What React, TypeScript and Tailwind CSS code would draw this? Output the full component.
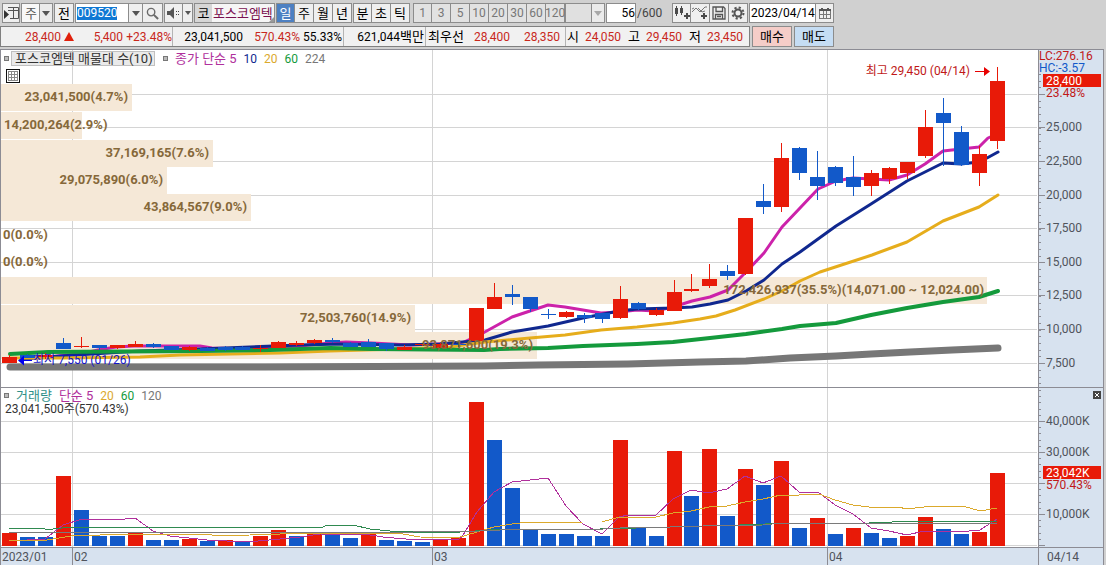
import { ReactNode } from "react";
import clsx from "clsx";

const RED = "#e81a08";
const BLUE = "#1259c9";
const GRID = "#d4d4d4";
const AXIS = "#8c8c94";

// Both panes share one coordinate system, only the view box differs.
const LEFT = 1;
const WIDTH = 1102;
const AXIS_X = 1038;
const STEP = 17.96;
const BAR = 15;
const MONTH_LINES = [72, 432, 827];

const barX = (i: number) => Math.round(2 + STEP * i);

// [up, high, body top, body bottom, low]
type Candle = [boolean, number, number, number, number];

const candles: Candle[] = [
  [true, 355, 357, 363, 363],
  [false, 354, 355, 358, 358],
  [true, 353, 355, 357, 359],
  [false, 338, 343, 349, 349],
  [true, 337, 346, 347, 348],
  [false, 345, 345, 348, 350],
  [true, 345, 345, 348, 349],
  [true, 341, 344, 347, 347],
  [false, 343, 344, 347, 348],
  [false, 346, 346, 350, 350],
  [true, 346, 347, 350, 351],
  [false, 347, 348, 351, 351],
  [false, 346, 347, 350, 351],
  [false, 346, 347, 350, 350],
  [true, 345, 348, 349, 352],
  [true, 341, 342, 348, 348],
  [true, 341, 343, 345, 346],
  [true, 339, 340, 343, 344],
  [false, 338, 340, 342, 343],
  [false, 342, 343, 347, 347],
  [false, 339, 342, 347, 347],
  [false, 343, 343, 349, 351],
  [true, 345, 347, 350, 350],
  [true, 344, 344, 345, 346],
  [true, 343, 344, 348, 348],
  [false, 341, 344, 345, 347],
  [true, 308, 308, 341, 341],
  [true, 283, 297, 309, 309],
  [false, 285, 294, 297, 305],
  [false, 297, 297, 309, 312],
  [false, 309, 314, 315, 319],
  [true, 311, 312, 317, 318],
  [false, 313, 315, 318, 323],
  [false, 313, 313, 319, 323],
  [true, 286, 299, 318, 319],
  [false, 302, 303, 309, 310],
  [true, 308, 310, 315, 316],
  [true, 280, 292, 311, 311],
  [true, 274, 289, 291, 292],
  [true, 264, 279, 286, 288],
  [false, 265, 271, 276, 280],
  [true, 218, 218, 274, 275],
  [false, 184, 201, 207, 214],
  [true, 143, 158, 207, 212],
  [false, 147, 148, 173, 180],
  [false, 151, 177, 186, 200],
  [false, 166, 167, 183, 186],
  [false, 156, 177, 187, 196],
  [true, 170, 173, 186, 196],
  [true, 167, 168, 179, 184],
  [true, 162, 162, 173, 179],
  [true, 110, 127, 156, 158],
  [false, 98, 113, 123, 166],
  [false, 126, 132, 165, 166],
  [true, 146, 154, 173, 186],
  [true, 67, 81, 141, 149],
];

// [up, top of the bar]
const volumes: [boolean, number][] = [
  [true, 533], [false, 537], [false, 537], [true, 476], [false, 510],
  [false, 536], [false, 536], [true, 533], [false, 540], [false, 540],
  [true, 539], [false, 541], [true, 540], [false, 541], [true, 536],
  [true, 530], [false, 536], [true, 534], [false, 534], [false, 538],
  [true, 534], [false, 540], [false, 541], [false, 542], [true, 540],
  [true, 538], [true, 402], [false, 440], [false, 488], [false, 530],
  [false, 534], [false, 534], [false, 536], [false, 536], [true, 440],
  [false, 528], [false, 536], [true, 451], [false, 496], [true, 449],
  [false, 516], [true, 469], [false, 485], [true, 461], [false, 528],
  [true, 518], [false, 534], [true, 528], [false, 533], [false, 538],
  [true, 536], [true, 517], [false, 529], [false, 534], [true, 532],
  [true, 473],
];

const priceLines = [
  {
    color: "#777777",
    width: 7,
    points:
      "10,367 265,367 484,366 538,365 628,364 700,362 746,361 790,358 836,356 871,354 910,352 952,350 998,348",
  },
  {
    color: "#cc22aa",
    width: 3,
    points:
      "23,359 48,357 80,354 98,350 116,347 134,346 200,346 212,348 250,349 282,347 300,346 330,343 346,342 372,343 410,345 462,343 483,333 512,317 530,311 548,305 565,307 583,310 601,313 619,312 637,310 655,311 673,307 692,301 710,297 728,290 746,272 764,253 782,227 800,208 818,189 836,181 853,178 871,179 889,180 907,175 925,164 943,151 961,149 979,147 988,138 997,134",
  },
  {
    color: "#10288f",
    width: 3,
    points:
      "23,359 60,356 140,351 200,349 250,347 300,345 340,344 400,345 440,344 485,340 512,332 530,329 548,326 583,318 619,311 637,309 673,308 692,307 710,304 728,300 746,291 764,280 782,264 800,252 836,226 871,204 907,181 943,163 961,164 979,162 987,158 998,152",
  },
  {
    color: "#e6ad1c",
    width: 3,
    points:
      "10,358 60,358 140,357 180,355 280,353 330,351 400,349 450,347 485,342 530,338 565,335 601,330 637,327 673,323 700,319 716,316 735,310 764,299 782,291 800,281 820,272 872,255 907,242 943,221 979,207 998,195",
  },
  {
    color: "#149a3c",
    width: 4,
    points:
      "10,354 48,352 200,351 270,350 330,348 372,349 484,350 500,349 548,348 583,346 637,344 673,342 710,338 746,334 782,329 800,326 836,323 871,315 907,308 943,302 979,297 998,291",
  },
];

const volumeLines = [
  {
    color: "#b0309c",
    points:
      "9,541 45,539 63,525 82,519 125,519 135,518 153,531 170,536 207,540 247,542 280,539 300,537 320,534 370,535 383,537 417,540 442,539 457,540 462,537 477,512 494,492 512,482 530,480 548,478 566,506 583,524 602,534 619,517 628,515 656,515 673,499 691,490 709,493 727,489 745,476 763,483 781,476 799,492 818,492 835,505 853,514 871,528 889,531 907,535 924,531 969,531 980,530 997,519",
  },
  {
    color: "#dba92c",
    points:
      "9,540 47,540 77,535 100,535 127,534 207,534 217,536 250,535 280,534 287,533 397,533 420,537 457,538 477,532 494,527 512,524 520,523 583,522 602,522 619,517 656,517 673,513 691,511 709,507 727,506 745,502 763,499 781,495 799,495 819,494 835,500 853,505 869,507 899,507 906,509 933,506 963,506 980,511 997,508",
  },
  {
    color: "#2f8a50",
    points:
      "9,528 37,528 45,529 53,529 72,527 323,527 327,525 353,525 370,529 390,531 413,532 460,532 490,530 537,529 600,529 637,528 703,526 740,525 790,523 869,523 916,521 997,521",
  },
  {
    color: "#7a7a7a",
    points:
      "9,532 370,532 413,532 480,531 520,529 603,529 637,527 670,527 703,526 763,525 782,523 862,523 997,524",
  },
];

type Profile = { y: number; right: number; label: string; start?: boolean; end: number };

const profile: Profile[] = [
  { y: 84, right: 132, end: 128, label: "23,041,500(4.7%)" },
  { y: 112, right: 82, end: 4, start: true, label: "14,200,264(2.9%)" },
  { y: 140, right: 213, end: 209, label: "37,169,165(7.6%)" },
  { y: 167, right: 167, end: 163, label: "29,075,890(6.0%)" },
  { y: 194, right: 251, end: 247, label: "43,864,567(9.0%)" },
  { y: 222, right: 0, end: 3, start: true, label: "0(0.0%)" },
  { y: 249, right: 0, end: 3, start: true, label: "0(0.0%)" },
  { y: 277, right: 987, end: 984, label: "172,426,937(35.5%)(14,071.00 ~ 12,024.00)" },
  { y: 305, right: 415, end: 411, label: "72,503,760(14.9%)" },
  { y: 332, right: 537, end: 533, label: "93,871,600(19.3%)" },
];

const priceTicks = [
  { y: 94, label: "" },
  { y: 127, label: "25,000" },
  { y: 161, label: "22,500" },
  { y: 195, label: "20,000" },
  { y: 228, label: "17,500" },
  { y: 262, label: "15,000" },
  { y: 295, label: "12,500" },
  { y: 329, label: "10,000" },
  { y: 363, label: "7,500" },
];

const volumeTicks = [
  { y: 421, label: "40,000K" },
  { y: 452, label: "30,000K" },
  { y: 483, label: "" },
  { y: 514, label: "10,000K" },
  { y: 545, label: "" },
];

const months = [
  { label: "2023/01", cls: "grow-[71]" },
  { label: "02", cls: "grow-[359] border-l" },
  { label: "03", cls: "grow-[394] border-l" },
  { label: "04", cls: "grow-[210] border-l" },
  { label: "04/14", cls: "grow-[64] border-l" },
];

// --- Toolbar -------------------------------------------------------

function Arrow({ muted = false }: { muted?: boolean }) {
  return (
    <svg viewBox="0 0 8 5" className="h-[5px] w-2" aria-hidden="true">
      <path d="M0 0h8L4 5z" fill={muted ? "#a8a8a8" : "#555"} />
    </svg>
  );
}

function IconButton({
  label,
  className,
  children,
}: {
  label: string;
  className?: string;
  children: ReactNode;
}) {
  return (
    <button
      aria-label={label}
      className={clsx(
        "flex h-5 shrink-0 items-center justify-center border border-[#8c8c8c] bg-[#efefef]",
        className
      )}
    >
      {children}
    </button>
  );
}

function Combo({
  label,
  value,
  className,
  muted,
}: {
  label: string;
  value: string;
  className: string;
  muted?: boolean;
}) {
  return (
    <div className={clsx("relative flex h-5 shrink-0", className)}>
      <select
        aria-label={label}
        disabled={muted}
        className={clsx(
          "w-full appearance-none border border-[#8c8c8c] pl-[3px] text-[13px] leading-none text-[#555]",
          muted ? "bg-[#e0e0e0]" : "bg-[#f8f8f8]"
        )}
      >
        <option>{value}</option>
      </select>
      <span className="pointer-events-none absolute inset-y-0 right-0 flex w-[14px] items-center justify-center border border-[#8c8c8c] bg-[#ebebeb]">
        <Arrow muted={muted} />
      </span>
    </div>
  );
}

const periods = ["일", "주", "월", "년", "분", "초", "틱"];
const minutes = ["1", "3", "5", "10", "20", "30", "60", "120"];

function Toolbar() {
  return (
    <div className="flex h-[26px] items-center gap-px pl-[2px] whitespace-nowrap">
      <IconButton label="창 배치" className="w-[18px]">
        <svg viewBox="0 0 15 14" className="h-[14px] w-[15px]">
          <path d="M4 1.500h10.500v11H6M9.500 1.500v11M4 4.500h10.500" fill="none" stroke="#555" />
          <path d="M0 4l5 4.500L0 13z" fill="#333" />
        </svg>
      </IconButton>
      <Combo label="종목 구분" value="주" className="w-8" />
      <button className="h-5 w-5 shrink-0 border border-[#8c8c8c] bg-[#efefef] text-[13px] leading-none">
        전
      </button>
      <div className="flex h-5 shrink-0">
        <div className="flex w-[54px] items-center border border-[#8c8c8c] bg-white pl-px">
          <input
            aria-label="종목코드"
            defaultValue="009520"
            className="h-[13px] w-10 bg-[#0f78d4] text-[12px] leading-none text-white outline-none"
          />
        </div>
        <IconButton label="종목코드 목록" className="w-[14px] border-l-0">
          <Arrow />
        </IconButton>
        <IconButton label="종목 검색" className="w-5 border-l-0">
          <svg viewBox="0 0 14 14" className="size-[13px]" fill="none" stroke="#6a6a6a">
            <circle cx="5.500" cy="5.500" r="4" strokeWidth="1.500" />
            <path d="M8.500 8.500l4.500 4.500" strokeWidth="2.200" />
          </svg>
        </IconButton>
      </div>
      <div className="flex h-5 shrink-0">
        <IconButton label="음성" className="w-[19px]">
          <svg viewBox="0 0 14 12" className="h-3 w-[14px]">
            <path d="M0 4h3l4-4v12L3 8H0z" fill="#555" />
            <path d="M9 4h1v1H9zM9 7h1v1H9zM11 4h1v1h-1zM11 7h1v1h-1z" fill="#444" />
          </svg>
        </IconButton>
        <IconButton label="음성 설정" className="w-[10px] border-l-0">
          <svg viewBox="0 0 6 4" className="h-1 w-[6px]">
            <path d="M0 0h6L3 4z" fill="#555" />
          </svg>
        </IconButton>
      </div>
      <div className="relative flex h-5 w-[81px] shrink-0 items-center border border-[#8c8c8c] bg-[#f6f6f6] text-[13px] leading-none">
        <span className="flex h-[18px] w-[17px] items-center justify-center bg-[#d6d6d6]">코</span>
        <span className="pl-px text-[#7a1050]">포스코엠텍</span>
        <svg viewBox="0 0 5 5" className="absolute right-0 bottom-0 size-[5px]">
          <path d="M5 0v5H0z" fill="#999" />
        </svg>
      </div>
      <div className="flex h-5 shrink-0">
        {periods.map((p, i) => (
          <button
            key={p}
            className={clsx(
              "w-[19px] border-y border-r border-[#8c8c8c] text-[13px] leading-none",
              i === 0 ? "border-l bg-[#4d80c2] text-white" : "bg-[#efefef]",
              i === 3 && "mr-px",
              i === 4 && "border-l"
            )}
          >
            {p}
          </button>
        ))}
      </div>
      <div className="ml-[2px] flex h-5 shrink-0">
        {minutes.map((m, i) => (
          <button
            key={m}
            className={clsx(
              "flex w-[19px] items-center justify-center border-y border-r border-[#8c8c8c] bg-[#e2e2e2] text-[12px] leading-none text-[#777]",
              i === 0 && "border-l"
            )}
          >
            {m}
          </button>
        ))}
        <Combo label="분 선택" value="" muted className="w-10" />
      </div>
      <input
        aria-label="표시 봉수"
        defaultValue="56"
        className="h-5 w-[30px] shrink-0 border border-[#8c8c8c] bg-white text-right text-[12px] outline-none"
      />
      <span className="w-[33px] shrink-0 text-[12px] text-[#444]">/600</span>
      <div className="flex h-5 shrink-0 pl-px">
        <IconButton label="차트 종류" className="w-[19px]">
          <svg viewBox="0 0 16 14" className="h-[14px] w-4" fill="#4a4a4a">
            <path d="M2 0h1v10H2zM1 2h3v6H1zM7 0h1v9H7zM6 2h3v5H6z" />
            <path d="M12 7h2v2h2v2h-2v2h-2v-2h-2V9h2z" />
          </svg>
        </IconButton>
        <IconButton label="지표 추가" className="w-[19px] border-l-0">
          <svg viewBox="0 0 16 14" className="h-[14px] w-4">
            <path d="M0 6l4-4 4 4 5-5h2M0 3l2-1M6 2l4 4 3-1" fill="none" stroke="#777" />
            <path d="M11 7h2v2h2v2h-2v2h-2v-2H9V9h2z" fill="#4a4a4a" />
          </svg>
        </IconButton>
        <IconButton label="저장" className="w-[19px] border-l-0">
          <svg viewBox="0 0 14 14" className="size-[14px]" fill="none" stroke="#555" strokeWidth="1.300">
            <path d="M1 1h10.500L13 2.500V13H1zM4 1v4.500h6.500V1M3.500 13V8.500h7V13M5 10.500h4" />
          </svg>
        </IconButton>
        <IconButton label="설정" className="w-[19px] border-l-0">
          <svg viewBox="0 0 14 14" className="size-[14px]" fill="none" stroke="#555">
            <circle cx="7" cy="7" r="3.500" strokeWidth="2" />
            <circle cx="7" cy="7" r="5.500" strokeWidth="2" strokeDasharray="2.200 2.120" />
          </svg>
        </IconButton>
      </div>
      <div className="flex h-5 shrink-0">
        <input
          aria-label="기준일"
          defaultValue="2023/04/14"
          className="w-[67px] border border-[#8c8c8c] bg-white pl-px text-[12px] outline-none"
        />
        <IconButton label="달력" className="w-[18px] border-l-0">
          <svg viewBox="0 0 12 11" className="h-[11px] w-3" shapeRendering="crispEdges">
            <path d="M0.500 1.500h11v9H0.500zM4.500 3v7M7.500 3v7M1 6.500h10" fill="none" stroke="#777" />
            <path d="M0 1h12v2H0zM2 0h2v1H2zM8 0h2v1H8z" fill="#555" />
          </svg>
        </IconButton>
      </div>
    </div>
  );
}

function Quote({ className, children }: { className: string; children: ReactNode }) {
  return <span className={clsx("shrink-0 text-right", className)}>{children}</span>;
}

function QuoteRow() {
  const cell = "flex h-full shrink-0 items-center border-r border-[#b4b4b4]";
  return (
    <div className="flex h-[23px] items-start gap-[2px] text-[12px] leading-none whitespace-nowrap">
      <div className="flex h-[21px] w-[750px] shrink-0 items-center border border-[#808080] bg-[#f1f1f1]">
        <div className={clsx(cell, "w-[172px] text-[#c8281c]")}>
          <Quote className="w-[60px]">28,400</Quote>
          <svg viewBox="0 0 10 9" className="ml-[3px] h-[9px] w-[10px]">
            <path d="M5 0l5 9H0z" fill="#e0200c" />
          </svg>
          <Quote className="w-[49px]">5,400</Quote>
          <Quote className="w-[49px]">+23.48%</Quote>
        </div>
        <div className={clsx(cell, "w-[171px]")}>
          <Quote className="w-[70px]">23,041,500</Quote>
          <Quote className="w-[57px] text-[#c8281c]">570.43%</Quote>
          <Quote className="w-[42px]">55.33%</Quote>
        </div>
        <div className={clsx(cell, "w-[82px] justify-end pr-px")}>
          621,044<span className="text-[13px]">백만</span>
        </div>
        <div className={clsx(cell, "w-[140px]")}>
          <Quote className="w-[38px] text-[13px]">최우선</Quote>
          <Quote className="w-[46px] text-[#c8281c]">28,400</Quote>
          <Quote className="w-[50px] text-[#c8281c]">28,350</Quote>
        </div>
        <div className="flex items-center">
          <Quote className="w-[13px] text-[13px]">시</Quote>
          <Quote className="w-[42px] text-[#c8281c]">24,050</Quote>
          <Quote className="w-[19px] text-[13px]">고</Quote>
          <Quote className="w-[42px] text-[#c8281c]">29,450</Quote>
          <Quote className="w-[19px] text-[13px]">저</Quote>
          <Quote className="w-[42px] text-[#c8281c]">23,450</Quote>
        </div>
      </div>
      <button className="h-[21px] w-10 shrink-0 border border-[#8c8c8c] bg-[#f5cdc8] text-[13px] leading-none">
        매수
      </button>
      <button className="h-[21px] w-10 shrink-0 border border-[#8c8c8c] bg-[#c5ddf4] text-[13px] leading-none">
        매도
      </button>
    </div>
  );
}

// --- Charts --------------------------------------------------------

function Marker() {
  return <span className="size-[5px] shrink-0 border border-[#777] bg-[#bbb]" />;
}

function Axis({
  ticks,
  top,
  bottom,
  minor,
}: {
  ticks: { y: number; label: string }[];
  top: number;
  bottom: number;
  minor: number;
}) {
  const first = ticks[0].y;
  const count = Math.floor((bottom - first) / minor);
  const before = Math.floor((first - top) / minor);
  return (
    <g>
      <rect x={AXIS_X} y={top} width={LEFT + WIDTH - AXIS_X} height={bottom - top} fill="#d7e2ef" />
      <g shapeRendering="crispEdges" fill={AXIS}>
        <rect x={AXIS_X} y={top} width={1} height={bottom - top} />
        {Array.from({ length: count + before + 1 }, (_, i) => (
          <rect
            key={i}
            x={AXIS_X}
            y={Math.round(first + (i - before) * minor)}
            width={3}
            height={1}
          />
        ))}
        {ticks.map((t) => (
          <rect key={t.y} x={AXIS_X} y={t.y} width={7} height={1} />
        ))}
      </g>
      {ticks.map((t) => (
        <text key={t.y} x={1046} y={t.y + 4} fill="#50545c">
          {t.label}
        </text>
      ))}
    </g>
  );
}

function Grid({ rows, top, bottom }: { rows: number[]; top: number; bottom: number }) {
  return (
    <g fill={GRID} shapeRendering="crispEdges">
      {rows.map((y) => (
        <rect key={y} x={LEFT} y={y} width={1036} height={1} />
      ))}
      {MONTH_LINES.map((x) => (
        <rect key={x} x={x} y={top} width={1} height={bottom - top} />
      ))}
    </g>
  );
}

function PriceChart() {
  return (
    <svg viewBox={`${LEFT} 50 ${WIDTH} 337`} className="block h-auto w-full" fontSize={12}>
      <Grid rows={priceTicks.map((t) => t.y)} top={50} bottom={387} />
      <g shapeRendering="crispEdges">
        {profile.map((p) =>
          p.right ? (
            <rect key={p.y} x={LEFT} y={p.y} width={p.right - LEFT} height={27} fill="#f5e8d7" />
          ) : null
        )}
      </g>
      {priceLines.map((l) => (
        <polyline
          key={l.color}
          points={l.points}
          fill="none"
          stroke={l.color}
          strokeWidth={l.width}
          strokeLinejoin="round"
          strokeLinecap="round"
        />
      ))}
      <g shapeRendering="crispEdges">
        {candles.map(([up, high, top, bottom, low], i) => (
          <g key={i} fill={up ? RED : BLUE}>
            <rect x={barX(i) + 7} y={high} width={1} height={low - high} />
            <rect x={barX(i)} y={top} width={BAR} height={bottom - top} />
          </g>
        ))}
      </g>
      <g fontWeight={700} fontSize={13} fill="#86683a">
        {profile.map((p) => (
          <text key={p.y} x={p.end} y={p.y + 17} textAnchor={p.start ? "start" : "end"}>
            {p.label}
          </text>
        ))}
      </g>
      <g fill="#1414c8">
        <path d="M18 360.500l6-5v10zM24 360h8v1h-8z" fill="#0000ee" />
        <text x={33} y={364}>최저 7,550 (01/26)</text>
      </g>
      <g fill="#c01818">
        <text x={970} y={75} textAnchor="end">최고 29,450 (04/14)</text>
        <path d="M975 71h9v-4l6 4.500-6 4.500v-4h-9z" fill="#e80000" />
      </g>
      <Axis ticks={priceTicks} top={50} bottom={387} minor={6.73} />
      <rect x={AXIS_X + 1} y={51} width={63} height={23} fill="#d7e2ef" />
      <text x={1039} y={60} fill="#c01818">LC:276.16</text>
      <text x={1039} y={72} fill="#1259c9">HC:-3.57</text>
      <rect x={1043} y={74} width={58} height={13} fill={RED} />
      <text x={1046} y={85} fill="#fff">28,400</text>
      <text x={1046} y={97} fill="#c01818">23.48%</text>
    </svg>
  );
}

function VolumeChart() {
  return (
    <svg viewBox={`${LEFT} 388 ${WIDTH} 159`} className="block h-auto w-full" fontSize={12}>
      <Grid rows={volumeTicks.map((t) => t.y)} top={388} bottom={547} />
      <g shapeRendering="crispEdges">
        {volumes.map(([up, top], i) => (
          <rect
            key={i}
            x={barX(i)}
            y={top}
            width={BAR}
            height={546 - top}
            fill={up ? RED : BLUE}
          />
        ))}
        {volumeLines.map((l) => (
          <polyline key={l.color} points={l.points} fill="none" stroke={l.color} />
        ))}
      </g>
      <Axis ticks={volumeTicks} top={388} bottom={547} minor={6.2} />
      <rect x={1043} y={466} width={58} height={13} fill={RED} />
      <text x={1046} y={477} fill="#fff">23,042K</text>
      <text x={1046} y={489} fill="#c01818">570.43%</text>
    </svg>
  );
}

export default function App() {
  return (
    <main className="min-h-screen overflow-x-hidden bg-[#d0d0d0] font-[Roboto,'Noto_Sans_CJK_KR',sans-serif] text-black">
      <Toolbar />
      <QuoteRow />
      <div className="mr-[2px] border-x border-t border-[#8c8c94] bg-white text-[12px] leading-none whitespace-nowrap">
        <section className="relative">
          <PriceChart />
          <div className="absolute top-px left-[3px] flex h-[15px] items-center">
            <Marker />
            <span className="ml-[2px] flex h-[15px] w-[144px] items-center border border-[#c0c0c0] bg-[#eaeaea] pl-[3px] text-[13px] text-[#333]">
              포스코엠텍 매물대 수(10)
            </span>
            <span className="ml-2 flex items-center gap-[7px]">
              <Marker />
              <span className="text-[13px] text-[#b0309c]">종가 단순 5</span>
              <span className="text-[#10288f]">10</span>
              <span className="text-[#dba92c]">20</span>
              <span className="text-[#149a3c]">60</span>
              <span className="text-[#777]">224</span>
            </span>
          </div>
          <button aria-label="표 보기" className="absolute top-[19px] left-[5px] size-[14px]">
            <svg viewBox="0 0 14 14" className="size-[14px]" shapeRendering="crispEdges" fill="none">
              <path d="M.5.5h13v13H.5z" fill="#fff" stroke="#111" />
              <path d="M2.500 2.500h9v9h-9zM5.500 2v9M8.500 2v9M2 5.500h9M2 8.500h9" stroke="#888" />
            </svg>
          </button>
        </section>
        <section className="relative border-t border-[#8c8c94]">
          <VolumeChart />
          <div className="absolute top-px left-[3px] flex h-[13px] items-center gap-[7px]">
            <Marker />
            <span className="text-[13px] text-[#2f9088]">거래량</span>
            <span className="text-[13px] text-[#b0309c]">단순 5</span>
            <span className="text-[#dba92c]">20</span>
            <span className="text-[#149a3c]">60</span>
            <span className="text-[#777]">120</span>
          </div>
          <p className="absolute top-[15px] left-1 text-[#333]">23,041,500주(570.43%)</p>
          <button aria-label="닫기" className="absolute top-[3px] right-[2px] size-2 bg-[#444]">
            <svg viewBox="0 0 8 8" className="size-2" stroke="#fff">
              <path d="M2 2l4 4M6 2L2 6" />
            </svg>
          </button>
        </section>
        <div className="flex h-[18px] border-t border-[#8c8c94] bg-[#d7e2ef] text-[#50545c]">
          {months.map((m, i) => (
            <span
              key={m.label}
              className={clsx("flex min-w-0 basis-0 items-center border-[#8c8c94]", m.cls)}
            >
              <span className={i === months.length - 1 ? "pl-2" : "pl-px"}>{m.label}</span>
            </span>
          ))}
        </div>
      </div>
    </main>
  );
}
